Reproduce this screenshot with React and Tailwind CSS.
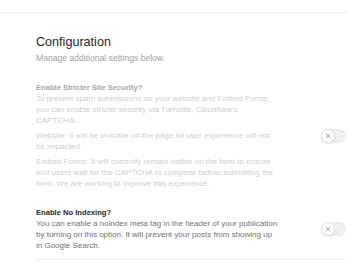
import React from "react";

function Toggle() {
  return (
    <div className="flex h-[14px] w-[25px] shrink-0 items-center rounded-full border border-[#ececec] bg-[repeating-linear-gradient(45deg,#e8e8e8_0px,#e8e8e8_1px,#f4f4f4_1px,#f4f4f4_3px)]">
      <div className="-ml-px flex h-[14px] w-[14px] items-center justify-center rounded-full border border-[#e4e4e7] bg-white shadow-[0_1px_2px_rgba(0,0,0,0.08)]">
        <svg width="6" height="6" viewBox="0 0 6 6" fill="none">
          <path d="M1 1L5 5M5 1L1 5" stroke="#a1a1aa" strokeWidth="1" strokeLinecap="round" />
        </svg>
      </div>
    </div>
  );
}

export default function App() {
  return (
    <div className="min-h-[268px] w-[348px] bg-white font-['Liberation_Sans',Arial,sans-serif]">
      <div className="h-[13px] border-b border-[#f1f1f1]" />
      <div className="pl-[36px] pr-[2px]">
        <h1 className="mt-[21px] text-[12.6px] leading-[16px] font-normal text-[#27272a]">
          Configuration
        </h1>
        <p className="mt-[2px] text-[8.6px] leading-[12px] text-[#a1a1aa]">
          Manage additional settings below.
        </p>

        <div className="mt-[18px] flex items-center gap-[10px]">
          <div className="w-[244px] text-[8px] leading-[11px]">
            <div className="text-[7.6px] font-bold text-[#a6a6a8]">Enable Stricter Site Security?</div>
            <p className="text-[#cfcfd3]">
              To prevent spam submissions on your website and Embed Forms, you can enable stricter security via Turnstile, Cloudflare's CAPTCHA.
            </p>
            <p className="mt-[4px] text-[#cfcfd3]">
              Website: It will be invisible on the page so user experience will not be impacted.
            </p>
            <p className="mt-[4px] text-[#cfcfd3]">
              Embed Forms: It will currently remain visible on the form to ensure end users wait for the CAPTCHA to complete before submitting the form. We are working to improve this experience.
            </p>
          </div>
          <div className="ml-auto">
            <Toggle />
          </div>
        </div>

        <div className="mt-[18px] flex items-center gap-[10px] border-b border-[#f1f1f1] pb-[8px]">
          <div className="w-[244px] text-[8px] leading-[11px]">
            <div className="text-[7.6px] font-bold text-[#27272a]">Enable No Indexing?</div>
            <p className="text-[#71717a]">
              You can enable a noindex meta tag in the header of your publication by turning on this option. It will prevent your posts from showing up in Google Search.
            </p>
          </div>
          <div className="ml-auto">
            <Toggle />
          </div>
        </div>
      </div>
    </div>
  );
}
